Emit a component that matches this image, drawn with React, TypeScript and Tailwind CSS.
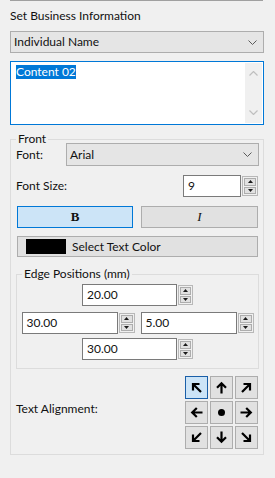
import React from "react";

const FONT = "font-['Lato','Liberation_Sans',sans-serif]";

function Tri({ up }: { up?: boolean }) {
  return (
    <svg width="5" height="3" viewBox="0 0 5 3">
      <path d={up ? "M0 3 L2.5 0 L5 3Z" : "M0 0 L2.5 3 L5 0Z"} fill="#1a1a1a" />
    </svg>
  );
}

function Chevron() {
  return (
    <svg width="9" height="5" viewBox="0 0 9 5">
      <path d="M0.5 0.5 L4.5 4.5 L8.5 0.5" fill="none" stroke="#5a5a5a" strokeWidth="1" />
    </svg>
  );
}

function Combo({ text, className = "" }: { text: string; className?: string }) {
  return (
    <div className={`flex items-center justify-between bg-[#e5e5e5] border border-[#adadad] pl-[3px] pr-[6px] ${className}`}>
      <span>{text}</span>
      <Chevron />
    </div>
  );
}

function Spinner({ value, boxClass, spinClass }: { value: string; boxClass: string; spinClass: string }) {
  return (
    <div className="flex h-[22px]">
      <div className={`h-full bg-white border border-[#7a7a7a] pl-[4px] flex items-center ${boxClass}`}>{value}</div>
      <div className={`ml-px h-full py-px ${spinClass}`}>
        <div className="h-full border border-[#b8b8b8] bg-[#f0f0f0] flex flex-col p-px gap-px">
          <div className="flex-1 bg-[#e1e1e1] border border-[#adadad] flex items-center justify-center">
            <Tri up />
          </div>
          <div className="flex-1 bg-[#e1e1e1] border border-[#adadad] flex items-center justify-center">
            <Tri />
          </div>
        </div>
      </div>
    </div>
  );
}

// arrow pointing up (or up-left when diag), rotated for the other directions
function Arrow({ rot, diag }: { rot: number; diag?: boolean }) {
  return (
    <svg width="13" height="13" viewBox="0 0 13 13">
      <g transform={`rotate(${rot} 6.5 6.5)`} stroke="#000" strokeWidth="2.2" fill="none">
        {diag ? (
          <path d="M11 11 L3.2 3.2 M2 3 H9.5 M3 2 V9.5" />
        ) : (
          <path d="M6.5 12.5 V2.2 M2 6.8 L6.5 2.2 L11 6.8" />
        )}
      </g>
    </svg>
  );
}

const cells = [
  { key: "tl", rot: 0, diag: true },
  { key: "t", rot: 0 },
  { key: "tr", rot: 90, diag: true },
  { key: "l", rot: 270 },
  { key: "c", rot: 0, dot: true },
  { key: "r", rot: 90 },
  { key: "bl", rot: 270, diag: true },
  { key: "b", rot: 180 },
  { key: "br", rot: 180, diag: true },
];

export default function App() {
  return (
    <div className={`w-[275px] h-[478px] bg-[#f0f0f0] overflow-hidden text-[12px] leading-[16px] text-[#111] ${FONT}`}>
      <div className="ml-[10px] w-[253px] h-px bg-[#a0a0a0]" />

      <div className="pl-[10px] pr-[11px]">
        <div className="mt-[7px]">Set Business Information</div>

        <Combo text="Individual Name" className="mt-[7px] h-[22px]" />

        {/* content box */}
        <div className="mt-[8px] h-[64px] bg-white border border-[#0078d7] flex">
          <div className="flex-1 pl-[5px] pt-[2px]">
            <span className="bg-[#0078d7] text-white leading-[14px] inline-block">Content 02</span>
          </div>
          <div className="w-[17px] my-px mr-px bg-[#f0f0f0] flex flex-col items-center justify-between py-[8px]">
            <svg width="9" height="5" viewBox="0 0 9 5">
              <path d="M0.5 4.5 L4.5 0.5 L8.5 4.5" fill="none" stroke="#bfbfbf" strokeWidth="1.2" />
            </svg>
            <svg width="9" height="5" viewBox="0 0 9 5">
              <path d="M0.5 0.5 L4.5 4.5 L8.5 0.5" fill="none" stroke="#bfbfbf" strokeWidth="1.2" />
            </svg>
          </div>
        </div>

        {/* Front group */}
        <fieldset className="mt-[9px] w-[254px] border border-[#dcdcdc] p-0 m-0">
          <legend className="ml-[5px] px-[2px] leading-[10px]">Front</legend>
          <div className="pl-[5px] pr-[4px] -mt-[1px] pb-[5px]">
            <div className="flex items-center h-[23px]">
              <span className="w-[50px]">Font:</span>
              <Combo text="Arial" className="flex-1 h-full" />
            </div>

            <div className="mt-[9px] flex items-center justify-between">
              <span>Font Size:</span>
              <div className="mr-[1px]">
                <Spinner value="9" boxClass="w-[58px] h-[23px]" spinClass="w-[16px]" />
              </div>
            </div>

            <div className="mt-[9px] ml-[1px] mr-[1px] flex gap-[8px] h-[22px]">
              <div className="w-[116px] bg-[#cce4f7] border border-[#0078d7] flex items-center justify-center font-['Liberation_Serif',serif] font-bold text-[13px]">
                B
              </div>
              <div className="flex-1 bg-[#e1e1e1] border border-[#adadad] flex items-center justify-center font-['Liberation_Serif',serif] italic text-[13px]">
                I
              </div>
            </div>

            <div className="mt-[8px] ml-[1px] mr-[1px] h-[21px] bg-[#e1e1e1] border border-[#adadad] flex items-center pl-[8px]">
              <div className="w-[40px] h-[15px] bg-black" />
              <span className="ml-[6px]">Select Text Color</span>
            </div>

            {/* Edge Positions group */}
            <fieldset className="mt-[12px] w-[243px] border border-[#dcdcdc] p-0 m-0">
              <legend className="ml-[5px] px-[2px] leading-[10px]">Edge Positions (mm)</legend>
              <div className="pt-[5px] pb-[8px] flex flex-col items-center">
                <Spinner value="20.00" boxClass="w-[95px]" spinClass="w-[15px]" />
                <div className="mt-[6px] flex gap-[6px]">
                  <Spinner value="30.00" boxClass="w-[96px]" spinClass="w-[16px]" />
                  <Spinner value="5.00" boxClass="w-[96px]" spinClass="w-[16px]" />
                </div>
                <div className="mt-[4px]">
                  <Spinner value="30.00" boxClass="w-[95px]" spinClass="w-[15px]" />
                </div>
              </div>
            </fieldset>

            <div className="mt-[7px] flex items-center justify-between pr-[1px]">
              <span className="pb-[7px]">Text Alignment:</span>
              <div className="grid grid-cols-3 gap-[2px]">
                {cells.map((c) => (
                  <div
                    key={c.key}
                    className={`w-[23px] h-[23px] flex items-center justify-center border ${
                      c.key === "tl" ? "bg-[#cce4f7] border-[#1a5fa8]" : "bg-[#e1e1e1] border-[#adadad]"
                    }`}
                  >
                    {c.dot ? (
                      <div className="w-[7px] h-[7px] rounded-full bg-black" />
                    ) : (
                      <Arrow rot={c.rot} diag={c.diag} />
                    )}
                  </div>
                ))}
              </div>
            </div>
          </div>
        </fieldset>
      </div>
    </div>
  );
}
